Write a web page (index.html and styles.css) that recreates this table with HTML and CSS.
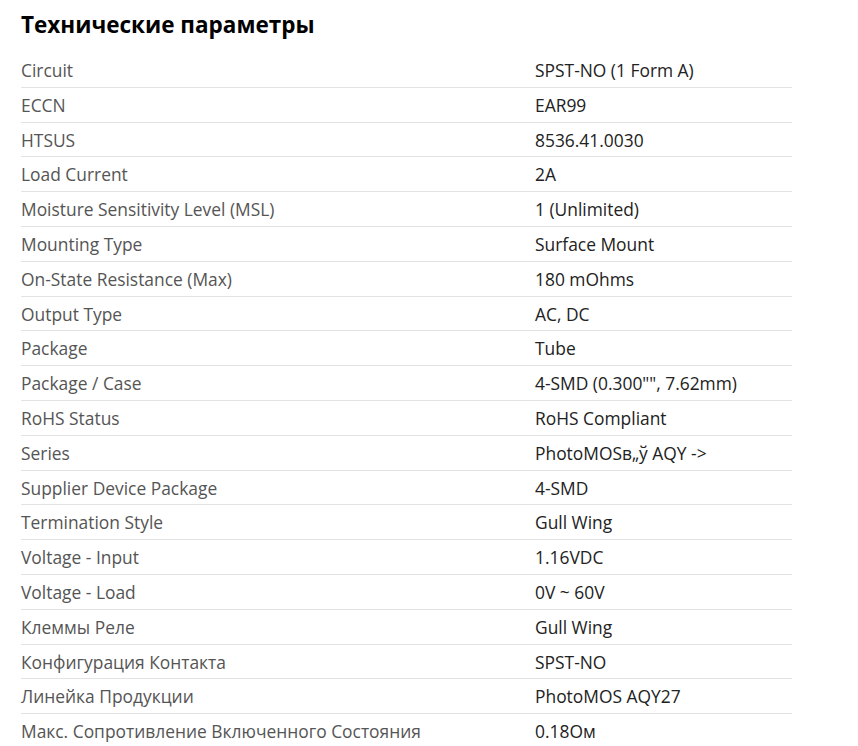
FILE: index.html
```html
<!DOCTYPE html>
<html lang="ru">
<head>
<meta charset="utf-8">
<link rel="stylesheet" href="styles.css">
</head>
<body>
<section class="specs">
  <h2 class="specs-title">Технические параметры</h2>
  <table class="specs-table">
    <tbody>
      <tr><td class="k">Circuit</td><td class="v">SPST-NO (1 Form A)</td></tr>
      <tr><td class="k">ECCN</td><td class="v">EAR99</td></tr>
      <tr><td class="k">HTSUS</td><td class="v">8536.41.0030</td></tr>
      <tr><td class="k">Load Current</td><td class="v">2A</td></tr>
      <tr><td class="k">Moisture Sensitivity Level (MSL)</td><td class="v">1 (Unlimited)</td></tr>
      <tr><td class="k">Mounting Type</td><td class="v">Surface Mount</td></tr>
      <tr><td class="k">On-State Resistance (Max)</td><td class="v">180 mOhms</td></tr>
      <tr><td class="k">Output Type</td><td class="v">AC, DC</td></tr>
      <tr><td class="k">Package</td><td class="v">Tube</td></tr>
      <tr><td class="k">Package / Case</td><td class="v">4-SMD (0.300"", 7.62mm)</td></tr>
      <tr><td class="k">RoHS Status</td><td class="v">RoHS Compliant</td></tr>
      <tr><td class="k">Series</td><td class="v">PhotoMOSв„ў AQY -&gt;</td></tr>
      <tr><td class="k">Supplier Device Package</td><td class="v">4-SMD</td></tr>
      <tr><td class="k">Termination Style</td><td class="v">Gull Wing</td></tr>
      <tr><td class="k">Voltage - Input</td><td class="v">1.16VDC</td></tr>
      <tr><td class="k">Voltage - Load</td><td class="v">0V ~ 60V</td></tr>
      <tr><td class="k">Клеммы Реле</td><td class="v">Gull Wing</td></tr>
      <tr><td class="k">Конфигурация Контакта</td><td class="v">SPST-NO</td></tr>
      <tr><td class="k">Линейка Продукции</td><td class="v">PhotoMOS AQY27</td></tr>
      <tr><td class="k">Макс. Сопротивление Включенного Состояния</td><td class="v">0.18Ом</td></tr>
    </tbody>
  </table>
</section>
</body>
</html>
```

FILE: styles.css
```css
html, body {
  margin: 0;
  padding: 0;
  background: #fff;
}
body {
  font-family: "Open Sans", "Noto Sans", sans-serif;
}
.specs {
  padding: 10px 0 0 21px;
  width: 771px;
}
.specs-title {
  margin: 0 0 13px 0;
  font-size: 22.5px;
  line-height: 30px;
  font-weight: 700;
  color: #000;
}
.specs-table {
  width: 100%;
  border-collapse: separate;
  border-spacing: 0;
}
.specs-table td {
  padding: 5px 0 4.8px;
  font-size: 17.4px;
  line-height: 24px;
  vertical-align: middle;
  border-bottom: 1px solid #e3e3e3;
}
.specs-table tr:last-child td {
  border-bottom: none;
}
.specs-table .k {
  width: 66.67%;
  color: #555;
}
.specs-table .v {
  color: #222;
}
```
